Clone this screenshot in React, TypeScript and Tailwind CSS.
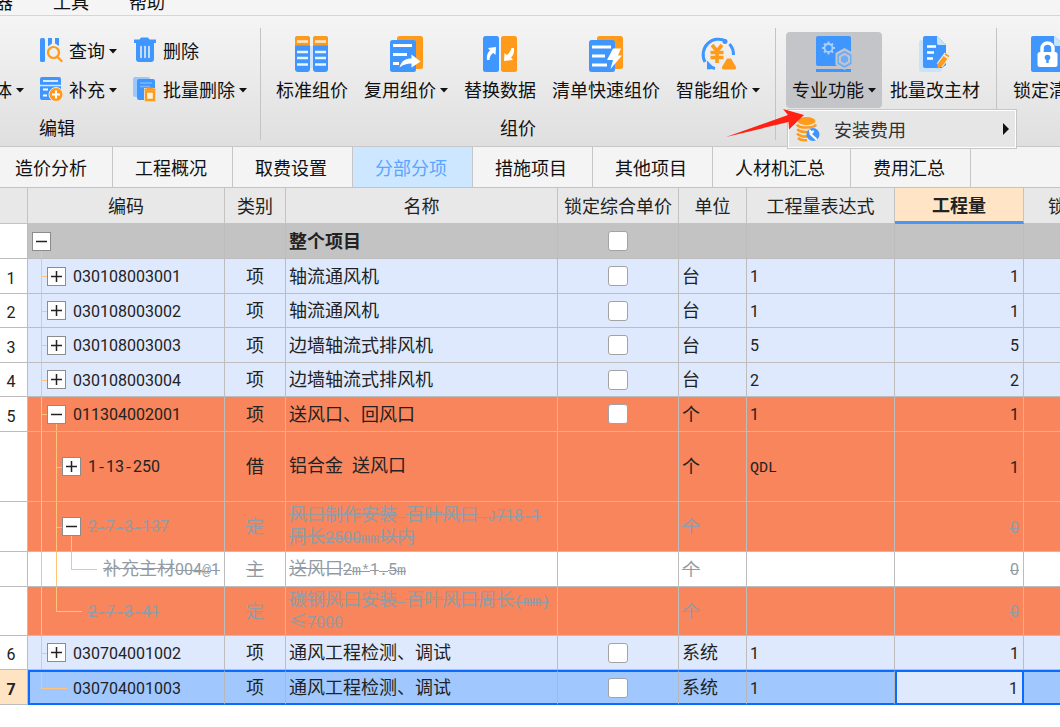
import React from 'react'
import clsx from 'clsx'

const BLUE = '#4096ff'
const ORANGE = '#ff9a1a'

/* ---------- icons ---------- */

const SearchBookIcon = () => (
    <svg width="24" height="26" viewBox="0 0 24 26" fill="none">
        <rect x="1" y="1" width="5" height="24" rx="1.500" fill={BLUE} />
        <path d="M9 1h4v5.500l-4 3zM16 1h4v8l-4-2.500z" fill={BLUE} />
        <circle cx="14.500" cy="15.500" r="5.500" stroke={ORANGE} strokeWidth="2.200" />
        <path d="M18.500 20l4 4" stroke={ORANGE} strokeWidth="2.400" strokeLinecap="round" />
    </svg>
)

const TrashIcon = () => (
    <svg width="24" height="26" viewBox="0 0 24 26" fill="none">
        <path d="M8 0.500h7l1.500 2H23v3.500H1V2.500h5.500z" fill={BLUE} />
        <path d="M3 5h18v17a3 3 0 0 1-3 3H6a3 3 0 0 1-3-3z" fill={BLUE} />
        <path d="M8 9.500v11M12 9.500v11M16 9.500v11" stroke="#e4eefb" strokeWidth="1.600" strokeLinecap="round" />
    </svg>
)

const AddRowsIcon = () => (
    <svg width="24" height="26" viewBox="0 0 24 26" fill="none">
        <rect x="1" y="1" width="21" height="23" rx="2" fill={BLUE} />
        <path d="M4 5h15" stroke="#d8e9ff" strokeWidth="2" />
        <path d="M1 9.500h21" stroke="#d8e9ff" strokeWidth="1.500" />
        <path d="M4 13.500h5M4 19.500h4" stroke="#fff" strokeWidth="1.800" />
        <circle cx="17" cy="18.500" r="7" fill={ORANGE} stroke="#ededed" strokeWidth="1" />
        <path d="M17 14.500v8M13 18.500h8" stroke="#fff" strokeWidth="2" />
    </svg>
)

const BatchDeleteIcon = () => (
    <svg width="24" height="26" viewBox="0 0 24 26" fill="none">
        <rect x="0" y="1" width="17" height="20" rx="2" fill="#9cc9fb" />
        <rect x="4" y="3" width="18" height="21" rx="2" fill={BLUE} />
        <path d="M7 7h12M7 10.500h10" stroke="#7cb6ff" strokeWidth="1.500" />
        <path d="M11 12h11v13H11z" fill="#e9e9e9" />
        <path d="M11.500 13.500h11M14 12.500h6" stroke={ORANGE} strokeWidth="2" />
        <path d="M13 15.500h8v8.500h-8z" stroke={ORANGE} strokeWidth="2.400" fill="#fff3dd" />
    </svg>
)

const StandardIcon = () => (
    <svg width="36" height="36" viewBox="0 0 36 36" fill="none">
        {[1, 19].map((x) => (
            <g key={x}>
                <rect x={x} width="15" height="36" rx="3" fill={BLUE} />
                <path d={`M${x} 9.500V3a3 3 0 0 1 3-3h9a3 3 0 0 1 3 3V9.500z`} fill={ORANGE} />
                <path d={`M${x + 2} 5.500h11`} stroke="#ffe9cf" strokeWidth="2.600" />
                <path d={`M${x + 2} 16h11M${x + 2} 22h11M${x + 2} 28.500h11`} stroke="#eaf4ff" strokeWidth="2.400" />
            </g>
        ))}
        <path d="M16 10h3v22h-3z" fill="#cfe3fa" />
    </svg>
)

const ReuseIcon = () => (
    <svg width="36" height="36" viewBox="0 0 36 36" fill="none">
        <rect x="9" y="0" width="26" height="33" rx="2.500" fill={ORANGE} />
        <rect x="2" y="4" width="26" height="32" rx="2.500" fill={BLUE} />
        <path d="M5 9.500h19M5 18.500h14M5 27.500h6" stroke="#fff" strokeWidth="2.800" />
        <path d="M11.500 31.500c2-7 6-9 12-9V18.500l9 7-9 6V27.500c-5 0-8 1-12 4z" fill="#fff" />
    </svg>
)

const ReplaceIcon = () => (
    <svg width="36" height="36" viewBox="0 0 36 36" fill="none">
        <rect x="1" width="16" height="36" rx="2.500" fill={BLUE} />
        <rect x="19" width="16" height="36" rx="2.500" fill={ORANGE} />
        <path d="M5 24c-.500-5 1-8 3-9.500L6 12l8-1-.500 8-2.200-2C9 18.500 8 20 7.500 24z" fill="#fff" />
        <path d="M32 12c.500 5-1 8-3 9.500l2 2.500-9 1 .500-8 2.300 2c2.200-1.500 3.700-4 4.700-7z" fill="#fff" />
    </svg>
)

const QuickIcon = () => (
    <svg width="36" height="36" viewBox="0 0 36 36" fill="none">
        <rect x="9" y="0" width="26" height="33" rx="2.500" fill={ORANGE} />
        <rect x="1" y="4" width="26" height="32" rx="2.500" fill={BLUE} />
        <path d="M4 11h19M4 20h13M4 29h15" stroke="#fff" strokeWidth="2.800" />
        <path d="M25 12.500h8l-3 7h4L22.500 33l2.500-9h-6z" fill="#fff" />
    </svg>
)

const SmartIcon = () => (
    <svg width="38" height="36" viewBox="0 0 38 36" fill="none">
        <path d="M6 26A15.500 15.500 0 0 1 27 5M30.500 8a16 16 0 0 1 4 11M16 32.500a16 16 0 0 1-5-2" stroke={BLUE} strokeWidth="3" />
        <circle cx="26" cy="5.500" r="2.500" fill={BLUE} />
        <path d="M9 27l5 5-5 .500z" fill={BLUE} stroke={BLUE} strokeWidth="2" />
        <path d="M13 9l5 6 5-6M18 14v13M11.500 16.500h13M11.500 21.500h13" stroke={ORANGE} strokeWidth="3.600" />
        <path d="M28 22.500h4l5 8.500q.500 2.500-2 2.500H25q-2.500 0-2-2.500z" fill={ORANGE} />
    </svg>
)

const SpecialIcon = () => (
    <svg width="36" height="36" viewBox="0 0 36 36" fill="none">
        <rect x="0" y="0" width="35" height="30" rx="2" fill={BLUE} />
        <path d="M0 34.500h35" stroke={BLUE} strokeWidth="3" />
        <circle cx="12.500" cy="12" r="4" stroke="#a9cffb" strokeWidth="1.800" />
        <g stroke="#a9cffb" strokeWidth="2">
            <path d="M12.500 5.500v3M12.500 15.500v3M6 12h3M16 12h3M8 7.500l2 2M15 14.500l2 2M17 7.500l-2 2M10 14.500l-2 2" />
        </g>
        <path d="M28.500 12l9 5v12l-9 5-9-5V17z" fill="#c4c5c9" />
        <path d="M28.500 14.500l7 4v9.500l-7 4-7-4v-9.500z" fill="#6eaef8" />
        <path d="M28.500 18l4.500 2.600v5.300l-4.500 2.600L24 25.900v-5.300z" fill="#6eaef8" stroke="#c4c5c9" strokeWidth="2" />
    </svg>
)

const EditMaterialIcon = () => (
    <svg width="32" height="36" viewBox="0 0 32 36" fill="none">
        <rect x="0" y="4" width="23" height="32" rx="2.500" fill="#c8e4fd" />
        <path d="M6 0h12l9 9v20l-4 3H6a2 2 0 0 1-2-2V2a2 2 0 0 1 2-2z" fill={BLUE} />
        <path d="M18 0l9 9h-7a2 2 0 0 1-2-2z" fill="#c8e4fd" />
        <path d="M8 10.500h9M8 16.500h7M8 22.500h6" stroke="#fff" strokeWidth="2.400" />
        <path d="M20.500 29.500L28.500 18.500" stroke="#eee" strokeWidth="7" />
        <path d="M20.500 29.500L26.500 21.500M27.500 20l1-1.500" stroke={ORANGE} strokeWidth="4.800" />
        <path d="M18.500 27.500l4 3-4 2z" fill={ORANGE} />
    </svg>
)

const LockIcon = () => (
    <svg width="36" height="36" viewBox="0 0 36 36" fill="none">
        <path d="M2 0h21l12 10v24a2 2 0 0 1-2 2H2a2 2 0 0 1-2-2V2a2 2 0 0 1 2-2z" fill={BLUE} />
        <path d="M23 0l12 10H25a2 2 0 0 1-2-2z" fill="#c8e4fd" />
        <path d="M11 17v-4.500a5.500 5.500 0 0 1 11 0V17" stroke="#fff" strokeWidth="3.500" />
        <rect x="6.500" y="16" width="20" height="15" rx="2.500" fill="#fff" />
        <circle cx="16.500" cy="21.500" r="2.800" fill={BLUE} />
        <path d="M16.500 22v5" stroke={BLUE} strokeWidth="2.400" />
    </svg>
)

const CoinsIcon = () => (
    <svg width="24" height="26" viewBox="0 0 24 26" fill="none">
        <ellipse cx="10.500" cy="5" rx="9" ry="4" fill={ORANGE} />
        <path d="M1 8.500c2 4 17 4 19 0M1.500 13c2 3.500 12 4 16 1.500M1 17.500c2 3 8 3.500 11 2.500M2 22c2 2 6 2.500 9 2" stroke={ORANGE} strokeWidth="2.600" />
        <circle cx="17" cy="18.500" r="6.500" fill={BLUE} />
        <path d="M14 14.500l1 4 5 4.500M17 15.500l-2.500 2.500" stroke="#fff" strokeWidth="2.200" strokeLinecap="round" />
    </svg>
)

const Caret = () => (
    <svg width="8" height="5" viewBox="0 0 8 5" className="mt-[3px] shrink-0">
        <path d="M0 0h8L4 4.500z" fill="#111" />
    </svg>
)

/* ---------- ribbon ---------- */

interface ToolProps {
    label: string
    icon?: React.ReactNode
    caret?: boolean
    className?: string
}

const SmallTool: React.FC<ToolProps> = ({ label, icon, caret, className }) => (
    <button type="button" className={clsx('flex h-[39px] items-center gap-1 whitespace-nowrap', className)}>
        {icon && <span className="mr-[2px]">{icon}</span>}
        {label}
        {caret && <Caret />}
    </button>
)

const LargeTool: React.FC<ToolProps> = ({ label, icon, caret, className }) => (
    <button type="button" className={clsx('flex h-[76px] flex-col items-center rounded-sm pt-1 whitespace-nowrap', className || 'px-2')}>
        {icon}
        <span className="mt-[5px] flex items-center gap-1 leading-6">
            {label}
            {caret && <Caret />}
        </span>
    </button>
)

const Divider = () => <div className="mt-3 mb-1.5 w-px shrink-0 bg-[#c4c4c4]" />

const Ribbon = () => (
    <div className="flex h-[131px] border-b border-[#c8c8c8] bg-linear-to-b from-[#f5f5f5] to-[#dfdfdf]">
        <div className="flex w-[260px] shrink-0 flex-col pt-3.5">
            <div className="-ml-[6px] flex">
                <div className="flex w-[45px] flex-col pt-[39px]">
                    <SmallTool label="体" caret />
                </div>
                <div className="flex w-[94px] flex-col">
                    <SmallTool label="查询" icon={<SearchBookIcon />} caret />
                    <SmallTool label="补充" icon={<AddRowsIcon />} caret />
                </div>
                <div className="flex flex-col">
                    <SmallTool label="删除" icon={<TrashIcon />} />
                    <SmallTool label="批量删除" icon={<BatchDeleteIcon />} caret />
                </div>
            </div>
            <span className="pl-[39px] leading-[38px]">编辑</span>
        </div>
        <Divider />
        <div className="flex shrink-0 flex-col px-[7px] pt-4">
            <div className="flex">
                <LargeTool label="标准组价" icon={<StandardIcon />} />
                <LargeTool label="复用组价" icon={<ReuseIcon />} caret />
                <LargeTool label="替换数据" icon={<ReplaceIcon />} />
                <LargeTool label="清单快速组价" icon={<QuickIcon />} />
                <LargeTool label="智能组价" icon={<SmartIcon />} caret />
            </div>
            <span className="text-center leading-[38px]">组价</span>
        </div>
        <Divider />
        <div className="flex shrink-0 items-start pt-4 pr-2 pl-2.5">
            <div className="relative">
                <LargeTool label="专业功能" icon={<SpecialIcon />} caret className="bg-[#c4c5c9] px-1.5" />
                <div role="menu" className="absolute top-[78px] left-[2px] z-10 border border-white bg-[#e6e6e6] outline outline-[#c6c6c6]">
                    <button type="button" role="menuitem" className="flex h-9 w-[226px] items-center pr-1.5 pl-[7px] text-[#333]">
                        <CoinsIcon />
                        <span className="ml-3.5 flex-1 text-left">安装费用</span>
                        <svg width="6" height="12" viewBox="0 0 6 12">
                            <path d="M0 0l6 6-6 6z" fill="#111" />
                        </svg>
                    </button>
                </div>
                {/* pointer to the opened menu */}
                <svg className="absolute top-[77px] -left-[60px] z-20" width="78" height="29" viewBox="0 0 78 29">
                    <path d="M0 28L62 6 57 0l21 6-15 14.500-.500-7.500z" fill="#ff2214" />
                </svg>
            </div>
            <LargeTool label="批量改主材" icon={<EditMaterialIcon />} />
        </div>
        <Divider />
        <div className="flex shrink-0 items-start pt-4 pl-2">
            <LargeTool label="锁定清单" icon={<LockIcon />} />
        </div>
    </div>
)

/* ---------- grid ---------- */

// digits and latin characters take half of a chinese character's width
const Txt = ({ children, deleted }: { children: string; deleted?: boolean }) => (
    <>
        {children.split(/([0-9]+|[ -/:-~]+)/).map((part, i) => {
            const font = /^[0-9]/.test(part)
                ? 'font-[Roboto,sans-serif] text-base leading-none'
                : /^[ -~]/.test(part) && "font-['Liberation_Mono',monospace] text-[15px] leading-none"
            return <span key={i} className={clsx(font, deleted && 'text-[#939ca4] line-through decoration-1')}>{part}</span>
        })}
    </>
)

type Guide = 'through' | 'tee' | 'last'

interface Row {
    no?: string
    guides: Guide[]
    toggle?: 'open' | 'closed'
    code: string
    kind: string
    name: string
    lock?: boolean
    unit: string
    expr: string
    qty: string
    height: string
    bg: string
    deleted?: boolean
    bold?: boolean
    selected?: boolean
}

const LIGHT = 'bg-[#dee9fd]'
const WARN = 'bg-[#f8855b]'

const rows: Row[] = [
    { guides: [], toggle: 'open', code: '', kind: '', name: '整个项目', lock: true, unit: '', expr: '', qty: '', height: 'h-[35px]', bg: 'bg-[#c3c3c3]', bold: true },
    { no: '1', guides: ['tee'], toggle: 'closed', code: '030108003001', kind: '项', name: '轴流通风机', lock: true, unit: '台', expr: '1', qty: '1', height: 'h-[35px]', bg: LIGHT },
    { no: '2', guides: ['tee'], toggle: 'closed', code: '030108003002', kind: '项', name: '轴流通风机', lock: true, unit: '台', expr: '1', qty: '1', height: 'h-[34px]', bg: LIGHT },
    { no: '3', guides: ['tee'], toggle: 'closed', code: '030108003003', kind: '项', name: '边墙轴流式排风机', lock: true, unit: '台', expr: '5', qty: '5', height: 'h-[35px]', bg: LIGHT },
    { no: '4', guides: ['tee'], toggle: 'closed', code: '030108003004', kind: '项', name: '边墙轴流式排风机', lock: true, unit: '台', expr: '2', qty: '2', height: 'h-[34px]', bg: LIGHT },
    { no: '5', guides: ['tee'], toggle: 'open', code: '011304002001', kind: '项', name: '送风口、回风口', lock: true, unit: '个', expr: '1', qty: '1', height: 'h-[35px]', bg: WARN },
    { guides: ['through', 'tee'], toggle: 'closed', code: '1-13-250', kind: '借', name: '铝合金 送风口', unit: '个', expr: 'QDL', qty: '1', height: 'h-[70px]', bg: WARN },
    { guides: ['through', 'tee'], toggle: 'open', code: '2-7-3-137', kind: '定', name: '风口制作安装 百叶风口 J718-1\n周长2500mm以内', unit: '个', expr: '', qty: '0', height: 'h-[50px]', bg: WARN, deleted: true },
    { guides: ['through', 'through', 'last'], code: '补充主材004@1', kind: '主', name: '送风口2m*1.5m', unit: '个', expr: '', qty: '0', height: 'h-[35px]', bg: 'bg-white', deleted: true },
    { guides: ['through', 'last'], code: '2-7-3-41', kind: '定', name: '碳钢风口安装 百叶风口周长(mm)\n≤7000', unit: '个', expr: '', qty: '0', height: 'h-[49px]', bg: WARN, deleted: true },
    { no: '6', guides: ['tee'], toggle: 'closed', code: '030704001002', kind: '项', name: '通风工程检测、调试', lock: true, unit: '系统', expr: '1', qty: '1', height: 'h-[34px]', bg: LIGHT },
    { no: '7', guides: ['last'], code: '030704001003', kind: '项', name: '通风工程检测、调试', lock: true, unit: '系统', expr: '1', qty: '1', height: 'h-[35px]', bg: 'bg-[#a0c8ff]', selected: true },
]

const TreeGuide = ({ type, leaf }: { type: Guide; leaf: boolean }) => (
    <span className="relative w-[15px] shrink-0 self-stretch">
        <span className={clsx('absolute top-0 left-[7px] w-px bg-[#ffc47a]', type === 'last' ? 'h-1/2' : 'h-full')} />
        {type !== 'through' && <span className={clsx('absolute top-1/2 left-[7px] h-px bg-[#ffc47a]', leaf ? 'w-[26px]' : 'w-[8px]')} />}
    </span>
)

const Toggle = ({ state }: { state: 'open' | 'closed' }) => (
    <span className="relative flex w-[15px] shrink-0 items-center justify-center self-stretch">
        {state === 'open' && <span className="absolute top-1/2 bottom-0 left-[7px] w-px bg-[#ffc47a]" />}
        <button type="button" aria-label={state === 'open' ? '收起' : '展开'} className="relative flex size-[19px] shrink-0 items-center justify-center border border-[#8c8c8c] bg-white">
            <svg width="11" height="11" viewBox="0 0 11 11" stroke="#222" strokeWidth="1.500">
                <path d={state === 'open' ? 'M0 5.500h11' : 'M0 5.500h11M5.500 0v11'} />
            </svg>
        </button>
    </span>
)

const GridRow = ({ row }: { row: Row }) => {
    const line = row.selected ? 'border-y-2 border-r border-y-[#0a6cff] border-r-[#b4b8bd]' : 'border-r border-b border-[#bdbdbd]'
    const { deleted } = row

    return (
        <tr className={clsx(row.height, row.bg, row.bold && 'font-bold')}>
            <th className={clsx('border-r border-b border-[#bdbdbd] p-0 pr-[5px]', row.selected ? 'bg-[#ffe4c4] font-bold' : 'bg-white font-normal')}>
                {row.no && <Txt>{row.no}</Txt>}
            </th>
            <td className={clsx(line, 'h-[inherit] p-0', row.selected && 'border-l-2 border-l-[#0a6cff]')}>
                <div className={clsx('flex h-full items-center whitespace-nowrap', row.selected ? 'pl-1' : 'pl-1.5')}>
                    {row.guides.map((type, i) => <TreeGuide key={i} type={type} leaf={!row.toggle} />)}
                    {row.toggle ? <Toggle state={row.toggle} /> : <span className="w-[15px] shrink-0" />}
                    <span className="ml-[9px] pb-[3px]"><Txt deleted={deleted}>{row.code}</Txt></span>
                </div>
            </td>
            <td className={clsx(line, 'p-0 pb-[3px] text-center')}><Txt deleted={deleted}>{row.kind}</Txt></td>
            <td className={clsx(line, 'p-0 pb-[3px] pl-[3px] whitespace-pre')}><Txt deleted={deleted}>{row.name}</Txt></td>
            <td className={clsx(line, 'p-0')}>
                {row.lock && (
                    <input type="checkbox" aria-label="锁定综合单价" className="mx-auto block size-5 appearance-none rounded-[3px] border border-[#a3a3a3] bg-white checked:bg-[#4096ff]" />
                )}
            </td>
            <td className={clsx(line, 'p-0 pb-[3px] pl-[3px]')}><Txt deleted={deleted}>{row.unit}</Txt></td>
            <td className={clsx(line, 'p-0 pb-[3px] pl-[3px]')}><Txt>{row.expr}</Txt></td>
            <td className={clsx('p-0 pr-1 pb-[3px] text-right', row.selected ? 'border-2 border-[#0a6cff] bg-[#dee9fd]' : line)}>
                <Txt deleted={deleted}>{row.qty}</Txt>
            </td>
            <td className={clsx(line, 'p-0')} />
        </tr>
    )
}

const columns = ['编码', '类别', '名称', '锁定综合单价', '单位', '工程量表达式', '工程量', '锁定']

const Grid = () => (
    <div className="overflow-hidden">
        <table className="w-full min-w-[1180px] table-fixed border-separate border-spacing-0 leading-5 text-[#222]">
            <colgroup>
                <col className="w-[28px]" />
                <col className="w-[197px]" />
                <col className="w-[61px]" />
                <col className="w-[272px]" />
                <col className="w-[121px]" />
                <col className="w-[68px]" />
                <col className="w-[148px]" />
                <col className="w-[129px]" />
                <col />
            </colgroup>
            <thead>
                <tr className="h-9 bg-[#e8e8e8]">
                    <th className="border-r border-b border-[#c3c3c3] p-0" />
                    {columns.map((name) => (
                        <th
                            key={name}
                            className={clsx(
                                'border-r p-0 pb-[2px] whitespace-nowrap',
                                name === '工程量' ? 'border-b-3 border-r-[#c3c3c3] border-b-[#4596f7] bg-[#ffe5c6] font-bold' : 'border-b border-[#c3c3c3] font-normal',
                                name === '锁定' && 'pl-6 text-left'
                            )}
                        >
                            {name}
                        </th>
                    ))}
                </tr>
            </thead>
            <tbody>
                {rows.map((row, i) => <GridRow key={i} row={row} />)}
            </tbody>
        </table>
    </div>
)

const tabs = ['造价分析', '工程概况', '取费设置', '分部分项', '措施项目', '其他项目', '人材机汇总', '费用汇总']

const App: React.FC = () => {
    return (
        <div className="min-h-screen overflow-hidden bg-white font-['Noto_Sans_CJK_SC',sans-serif] text-lg text-[#111]">
            <nav className="-ml-[5px] flex h-4 items-end gap-10 border-b border-[#d6d6d6] bg-[#f5f5f5] leading-7">
                <button type="button">器</button>
                <button type="button">工具</button>
                <button type="button">帮助</button>
            </nav>
            <Ribbon />
            <div role="tablist" className="-ml-[7px] flex h-[41px] border-b border-[#c3c3c3] bg-[#f4f4f4]">
                {tabs.map((tab) => (
                    <button
                        key={tab}
                        type="button"
                        role="tab"
                        aria-selected={tab === '分部分项'}
                        className={clsx('shrink-0 border-r border-[#c6c6c6] pr-[25px] pl-[22px]', tab === '分部分项' && 'bg-[#cce7ff] text-[#5aa5ff]')}
                    >
                        {tab}
                    </button>
                ))}
            </div>
            <Grid />
        </div>
    )
}

export default App
